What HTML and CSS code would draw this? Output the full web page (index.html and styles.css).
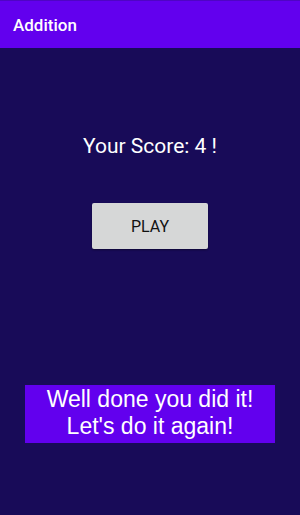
FILE: index.html
```html
<!DOCTYPE html>
<html lang="en">
<head>
    <meta charset="UTF-8">
    <meta name="viewport" content="width=device-width, initial-scale=1.0">
    <title>Addition</title>
    <link rel="stylesheet" href="styles.css">
</head>
<body>
    <!-- App bar -->
    <div class="app-bar">Addition</div>

    <div class="content">
        <p class="score">Your Score: 4 !</p>
        <button class="play-btn">PLAY</button>

        <div class="message">Well done you did it!<br>Let's do it again!</div>
    </div>
</body>
</html>
```
FILE: styles.css
```css
body {
    margin: 0;
    width: 300px;
    height: 515px;
    background-color: #180b58;
    font-family: Roboto, "Liberation Sans", sans-serif;
    overflow: hidden;
}

/*--------------App bar-------------*/
.app-bar {
    height: 48px;
    box-sizing: border-box;
    padding: 15px 0 0 13px;
    background-color: #6200ee;
    border-top: 1px solid #4f05c4;
    color: #fff;
    font-size: 17px;
    font-weight: 500;
    line-height: 18px;
}

/*--------------Content-------------*/
.content {
    display: flex;
    flex-direction: column;
    align-items: center;
}

.score {
    margin: 86px 0 0 0;
    color: #fff;
    font-size: 21px;
    line-height: 24px;
}

.play-btn {
    margin-top: 45px;
    width: 116px;
    height: 46px;
    border: none;
    border-radius: 2px;
    background-color: #d6d7d7;
    color: #111;
    font-family: Roboto, sans-serif;
    font-size: 16px;
    box-shadow: 0 1px 2px rgba(0, 0, 0, 0.4);
}

.message {
    margin-top: 136px;
    width: 250px;
    height: 58px;
    box-sizing: border-box;
    padding-top: 1px;
    background-color: #6200ee;
    color: #fff;
    font-family: "Liberation Sans", Arial, sans-serif;
    font-size: 23px;
    line-height: 27px;
    text-align: center;
}
```
